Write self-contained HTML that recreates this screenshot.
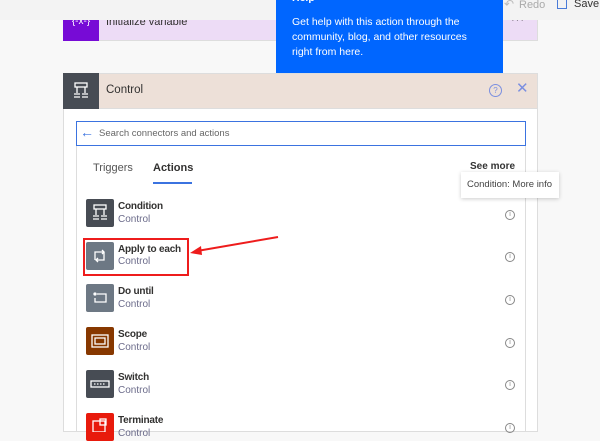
<!DOCTYPE html>
<html><head><meta charset="utf-8"><style>
*{margin:0;padding:0;box-sizing:border-box}
body{width:600px;height:432px;overflow:hidden;background:#f8f8f8;font-family:"Liberation Sans",sans-serif;position:relative;color:#323130}
.a{position:absolute}
.row .ic{position:absolute;left:86px;width:28px;height:28px;border-radius:2px}
.t{position:absolute;left:118px;font-size:10px;font-weight:bold;color:#323130;letter-spacing:-0.2px}
.s{position:absolute;left:118px;font-size:10px;color:#6b6b8a}
.inf{position:absolute;left:505px;width:10px;height:10px;border:1px solid #888;border-radius:50%;font-size:7px;line-height:8px;text-align:center;color:#888}
</style></head><body>
<div class="a" style="left:63px;top:0;width:475px;height:41px;background:#eddcf6;border:1px solid #ddd"></div>
<div class="a" style="left:63px;top:0;width:36px;height:41px;background:#770bd6;color:#fff;font-size:10px;text-align:center;line-height:44px">{-x-}</div>
<div class="a" style="left:106px;top:16px;font-size:11px;color:#323130">Initialize variable</div>
<div class="a" style="left:511px;top:14px;font-size:11px;color:#333;letter-spacing:1px">···</div>
<div class="a" style="left:0;top:0;width:600px;height:20px;background:#f3f3f3"></div>
<div class="a" style="left:276px;top:0;width:227px;height:73px;background:#0066ff;color:#fff;font-size:10.5px;line-height:15px;padding:15px 0 0 16px">
<div class="a" style="left:16px;top:-9px;font-weight:bold">Help</div>
Get help with this action through the<br>community, blog, and other resources<br>right from here.</div>
<div class="a" style="left:504px;top:-3px;font-size:12px;color:#bbb">↶</div>
<div class="a" style="left:519px;top:-1px;font-size:11px;color:#aaa">Redo</div>
<div class="a" style="left:557px;top:0;width:10px;height:9px;border:1.5px solid #4a7bd8;border-top:none"></div>
<div class="a" style="left:574px;top:-2px;font-size:11px;color:#323130">Save</div>
<div class="a" style="left:63px;top:73px;width:475px;height:359px;background:#fff;border:1px solid #ddd"></div>
<div class="a" style="left:63px;top:73px;width:475px;height:36px;background:#ede0d8;border:1px solid #ddd"></div>
<div class="a" style="left:63px;top:73px;width:36px;height:36px;background:#474c54"></div>
<svg class="a" style="left:71px;top:82px" width="20" height="18" viewBox="0 0 18 18" fill="none" stroke="#fff" stroke-width="1.3"><rect x="3" y="1" width="12" height="4"/><path d="M5 5v6M13 5v6M2 12h6M10 12h6M2 15h6M10 15h6"/></svg>
<div class="a" style="left:106px;top:84px;font-size:11.5px;color:#323130">Control</div>
<div class="a" style="left:489px;top:84px;width:13px;height:13px;border:1.3px solid #7b8fe0;border-radius:50%;font-size:8px;line-height:11px;text-align:center;color:#7b8fe0">?</div>
<div class="a" style="left:516px;top:79px;font-size:15px;color:#7b8fe0">✕</div>
<div class="a" style="left:76px;top:121px;width:450px;height:311px;border:1px solid #ddd;border-top:none"></div>
<div class="a" style="left:76px;top:121px;width:450px;height:25px;border:1.5px solid #3b73e0;background:#fff"></div>
<div class="a" style="left:80px;top:124px;font-size:14px;color:#3b73e0">←</div>
<div class="a" style="left:99px;top:128px;font-size:9.5px;color:#666">Search connectors and actions</div>
<div class="a" style="left:93px;top:162px;font-size:11px;color:#555">Triggers</div>
<div class="a" style="left:153px;top:162px;font-size:11px;font-weight:bold;color:#323130">Actions</div>
<div class="a" style="left:153px;top:182px;width:39px;height:2px;background:#3b73e0"></div>
<div class="a" style="left:470px;top:161px;font-size:10px;font-weight:bold;color:#333">See more</div>
<div class="a" style="left:461px;top:172px;width:98px;height:26px;background:#fff;box-shadow:0 1px 4px rgba(0,0,0,.2);font-size:9.5px;color:#444;padding:7px 0 0 6px">Condition: More info</div>
<div class="row">
<div class="ic" style="top:199px;background:#474c54"></div>
<svg class="a" style="left:91px;top:204px" width="18" height="18" viewBox="0 0 18 18" fill="none" stroke="#fff" stroke-width="1.3"><rect x="3" y="1" width="12" height="4"/><path d="M5 5v6M13 5v6M2 12h6M10 12h6M2 15h6M10 15h6"/></svg>
<div class="t" style="top:201px">Condition</div><div class="s" style="top:214px">Control</div><div class="inf" style="top:210px">i</div>
<div class="ic" style="top:242px;background:#6d7884"></div>
<svg class="a" style="left:92px;top:249px" width="16" height="14" viewBox="0 0 16 14" fill="none" stroke="#fff" stroke-width="1.3"><path d="M3 11V3h9M12 3v8H4"/><path d="M10 1l2 2-2 2M6 9l-2 2 2 2"/></svg>
<div class="t" style="top:244px">Apply to each</div><div class="s" style="top:256px">Control</div><div class="inf" style="top:252px">i</div>
<div class="ic" style="top:284px;background:#6d7884"></div>
<svg class="a" style="left:92px;top:291px" width="16" height="14" viewBox="0 0 16 14" fill="none" stroke="#fff" stroke-width="1.3"><path d="M5 3h9v8H3V7"/><circle cx="3" cy="3" r="1" fill="#fff"/></svg>
<div class="t" style="top:286px">Do until</div><div class="s" style="top:299px">Control</div><div class="inf" style="top:295px">i</div>
<div class="ic" style="top:327px;background:#873800"></div>
<svg class="a" style="left:91px;top:334px" width="18" height="14" viewBox="0 0 18 14" fill="none" stroke="#fff" stroke-width="1.3"><rect x="1" y="1" width="16" height="12"/><rect x="4" y="4" width="10" height="6"/></svg>
<div class="t" style="top:329px">Scope</div><div class="s" style="top:342px">Control</div><div class="inf" style="top:338px">i</div>
<div class="ic" style="top:370px;background:#474c54"></div>
<svg class="a" style="left:90px;top:379px" width="20" height="10" viewBox="0 0 20 10" fill="none" stroke="#fff" stroke-width="1.3"><rect x="1" y="2" width="18" height="6"/><path d="M4 5h12" stroke-dasharray="1.5 1.5"/></svg>
<div class="t" style="top:372px">Switch</div><div class="s" style="top:385px">Control</div><div class="inf" style="top:380px">i</div>
<div class="ic" style="top:413px;background:#e81a0c"></div>
<svg class="a" style="left:92px;top:418px" width="16" height="14" viewBox="0 0 16 14" fill="none" stroke="#fff" stroke-width="1.3"><rect x="1" y="3" width="12" height="11"/><rect x="8" y="1" width="6" height="6"/></svg>
<div class="t" style="top:415px">Terminate</div><div class="s" style="top:428px">Control</div><div class="inf" style="top:423px">i</div>
</div>
<div class="a" style="left:83px;top:238px;width:106px;height:38px;border:2px solid #ee1c1c"></div>
<svg class="a" style="left:185px;top:232px" width="100" height="26" viewBox="0 0 100 26"><path d="M93 5L12 19" stroke="#ee1c1c" stroke-width="2"/><path d="M5 21l11-7 1 9z" fill="#ee1c1c"/></svg>
</body></html>
